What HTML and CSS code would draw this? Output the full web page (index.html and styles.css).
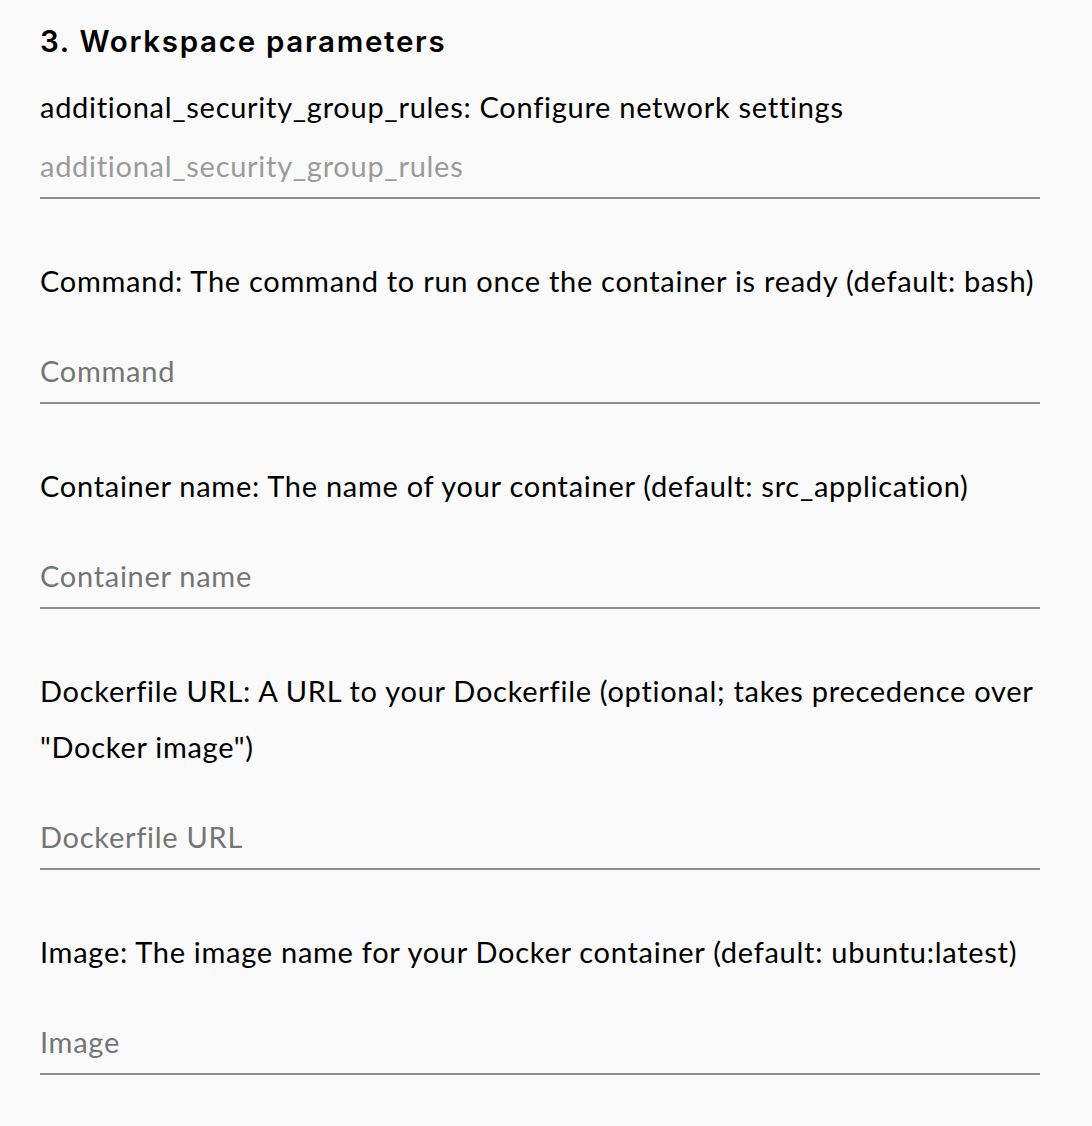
FILE: index.html
```html
<!DOCTYPE html>
<html lang="en">
<head>
<meta charset="utf-8">
<title>Workspace parameters</title>
<link rel="stylesheet" href="styles.css">
</head>
<body>
<main class="page">
  <h2 class="section-title">3. Workspace parameters</h2>

  <div class="field field-compact">
    <label class="field-label" for="f1">additional_security_group_rules: Configure network settings</label>
    <input class="field-input field-input-light" id="f1" type="text" placeholder="additional_security_group_rules">
  </div>

  <div class="field">
    <label class="field-label" for="f2">Command: The command to run once the container is ready (default: bash)</label>
    <input class="field-input" id="f2" type="text" placeholder="Command">
  </div>

  <div class="field">
    <label class="field-label" for="f3">Container name: The name of your container (default: src_application)</label>
    <input class="field-input" id="f3" type="text" placeholder="Container name">
  </div>

  <div class="field">
    <label class="field-label" for="f4">Dockerfile URL: A URL to your Dockerfile (optional; takes precedence over "Docker image")</label>
    <input class="field-input" id="f4" type="text" placeholder="Dockerfile URL">
  </div>

  <div class="field">
    <label class="field-label" for="f5">Image: The image name for your Docker container (default: ubuntu:latest)</label>
    <input class="field-input" id="f5" type="text" placeholder="Image">
  </div>
</main>
</body>
</html>
```

FILE: styles.css
```css
html, body {
  margin: 0;
  padding: 0;
  background: #fafafa;
}

body {
  font-family: "Lato", "Open Sans", sans-serif;
  color: #000;
}

.page {
  width: 1000px;
  padding: 21px 0 0 40px;
  display: flex;
  flex-direction: column;
}

.section-title {
  margin: 0;
  font-family: "Inter", "Lato", sans-serif;
  font-weight: 600;
  font-size: 29.5px;
  line-height: 40px;
  height: 40px;
  letter-spacing: 1.7px;
}

.field {
  display: flex;
  flex-direction: column;
  gap: 32px;
  margin-top: 54px;
}

.field-compact {
  gap: 1px;
  margin-top: 18px;
}

.field-label {
  font-size: 29px;
  line-height: 56px;
  letter-spacing: 0.72px;
}

.field-input {
  box-sizing: border-box;
  width: 1000px;
  height: 63px;
  margin: 0;
  padding: 0 0 3px 0;
  border: none;
  border-bottom: 2px solid #8f8f8f;
  background: transparent;
  font-family: inherit;
  font-size: 29px;
  letter-spacing: 0.72px;
  line-height: 58px;
  color: #000;
  outline: none;
}

.field-input::placeholder {
  color: #757575;
  opacity: 1;
}

.field-input-light::placeholder {
  color: #9b9b9b;
}
```
